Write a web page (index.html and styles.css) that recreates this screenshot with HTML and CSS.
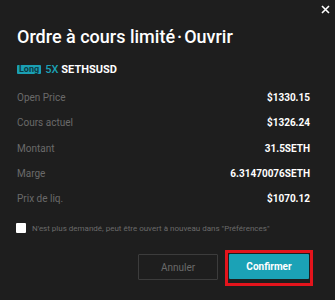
FILE: index.html
```html
<!DOCTYPE html>
<html lang="fr">
<head>
    <meta charset="UTF-8">
    <title>Ordre à cours limité</title>
    <link rel="stylesheet" href="styles.css">
</head>
<body>
    <div class="dialog">
        <button class="close" aria-label="Fermer">
            <svg width="9" height="9" viewBox="0 0 9 9"><path d="M1 1L8 8M8 1L1 8" stroke="#fff" stroke-width="1.6"/></svg>
        </button>

        <h1 class="title">Ordre à cours limité<span class="dot">·</span>Ouvrir</h1>

        <div class="pair">
            <span class="badge">Long</span>
            <span class="lev">5X</span>
            <span class="sym">SETHSUSD</span>
        </div>

        <div class="rows">
            <div class="row"><span class="label">Open Price</span><span class="value">$1330.15</span></div>
            <div class="row"><span class="label">Cours actuel</span><span class="value">$1326.24</span></div>
            <div class="row"><span class="label">Montant</span><span class="value">31.5SETH</span></div>
            <div class="row"><span class="label">Marge</span><span class="value">6.31470076SETH</span></div>
            <div class="row"><span class="label">Prix de liq.</span><span class="value">$1070.12</span></div>
        </div>

        <label class="check">
            <span class="box"></span>
            N'est plus demandé, peut être ouvert à nouveau dans "Préférences"
        </label>

        <div class="actions">
            <button class="btn cancel">Annuler</button>
            <div class="highlight">
                <button class="btn confirm">Confirmer</button>
            </div>
        </div>
    </div>
</body>
</html>
```

FILE: styles.css
```css
body {
    margin: 0;
    background: #1e1e1e;
    font-family: Roboto, "Liberation Sans", sans-serif;
    color: #fff;
}

.dialog {
    position: relative;
    width: 335px;
    height: 300px;
    padding: 0 25px 0 17px;
    box-sizing: border-box;
}

.close {
    position: absolute;
    top: 5px;
    right: 5px;
    background: none;
    border: none;
    padding: 0;
    width: 9px;
    height: 9px;
    line-height: 0;
}

.title {
    margin: 0;
    padding-top: 26px;
    font-size: 18px;
    font-weight: 500;
    line-height: 22px;
    color: #fff;
}

.title .dot {
    margin: 0 2px;
}

.pair {
    display: flex;
    align-items: center;
    margin-top: 16px;
    height: 10px;
    font-size: 11px;
    font-weight: 700;
}

.badge {
    background: #1b9fb3;
    color: #0d3a42;
    font-size: 9px;
    font-weight: 700;
    line-height: 9px;
    padding: 0 2px;
    border-radius: 1px;
    margin-right: 4px;
}

.lev {
    color: #1ba2b6;
    font-weight: 500;
    margin-right: 3px;
}

.sym {
    color: #fff;
}

.rows {
    margin-top: 11px;
}

.row {
    display: flex;
    justify-content: space-between;
    align-items: center;
    height: 25.3px;
    font-size: 10px;
}

.label {
    color: #6a6a6a;
}

.value {
    font-weight: 700;
    color: #fff;
}

.check {
    display: flex;
    align-items: center;
    margin-top: 12px;
    margin-left: -1px;
    font-size: 8px;
    color: #6a6a6a;
}

.box {
    width: 10px;
    height: 10px;
    background: #fff;
    border-radius: 1px;
    margin-right: 6px;
}

.actions {
    display: flex;
    justify-content: flex-end;
    align-items: flex-start;
    margin-top: 17px;
    margin-right: -3px;
}

.btn {
    width: 80px;
    height: 26px;
    font-family: inherit;
    font-size: 10px;
    border-radius: 1px;
    cursor: pointer;
}

.cancel {
    margin-top: 4px;
    margin-right: 7px;
    background: none;
    border: 1px solid #3c3c3c;
    color: #6a6a6a;
}

.highlight {
    border: 3px solid #e3141c;
    padding: 1px 0 4px 1px;
    width: 81px;
}

.confirm {
    display: block;
    background: #1ba2b6;
    border: none;
    color: #fff;
    font-weight: 700;
    height: 25px;
}
```
